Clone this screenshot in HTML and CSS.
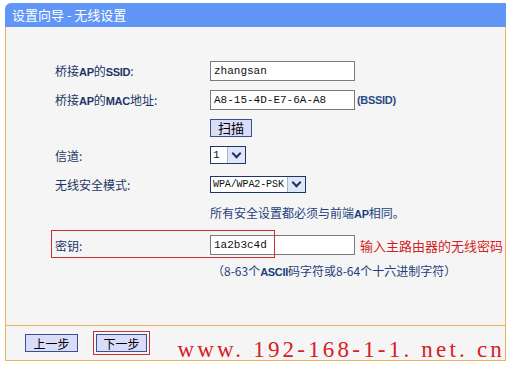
FILE: index.html
```html
<!DOCTYPE html>
<html lang="zh-CN">
<head>
    <meta charset="UTF-8">
    <title>设置向导 - 无线设置</title>
    <link rel="stylesheet" href="styles.css">
</head>
<body>

<div class="wizard">
    <div class="wizard-title">设置向导 - 无线设置</div>

    <div class="wizard-body">
        <div class="row r-ssid">
            <span class="label">桥接<b>AP</b>的<b>SSID</b>:</span>
            <input class="field" type="text" value="zhangsan">
        </div>
        <div class="row r-mac">
            <span class="label">桥接<b>AP</b>的<b>MAC</b>地址:</span>
            <input class="field" type="text" value="A8-15-4D-E7-6A-A8">
            <span class="bssid">(BSSID)</span>
        </div>
        <div class="row r-scan">
            <span class="label"></span>
            <button class="btn btn-scan">扫描</button>
        </div>
        <div class="row r-channel">
            <span class="label">信道:</span>
            <span class="dropdown dd-channel"><span class="dd-text">1</span><span class="dd-arrow"></span></span>
        </div>
        <div class="row r-mode">
            <span class="label">无线安全模式:</span>
            <span class="dropdown dd-mode"><span class="dd-text">WPA/WPA2-PSK</span><span class="dd-arrow"></span></span>
        </div>
        <div class="row r-note">
            <span class="label"></span>
            <span class="note">所有安全设置都必须与前端<b>AP</b>相同。</span>
        </div>
        <div class="row r-key">
            <span class="label">密钥:</span>
            <input class="field" type="text" value="1a2b3c4d">
            <span class="hint-red">输入主路由器的无线密码</span>
            <span class="mark mark-key"></span>
        </div>
        <div class="row r-hint">
            <span class="label"></span>
            <span class="note">（8-63个<b>ASCII</b>码字符或8-64个十六进制字符）</span>
        </div>
    </div>

    <div class="wizard-foot">
        <button class="btn btn-step">上一步</button>
        <span class="next-wrap">
            <button class="btn btn-step">下一步</button>
        </span>
        <span class="watermark">www. 192-168-1-1. net. cn</span>
    </div>
</div>

</body>
</html>
```

FILE: styles.css
```css
body {
    margin: 0;
    background: #ffffff;
    font-family: "Noto Sans CJK SC", "Liberation Sans", sans-serif;
    font-size: 12px;
    color: #1d3566;
}

.wizard {
    width: 501px;
    margin: 3px 0 0 5px;
}

.wizard-title {
    height: 24px;
    line-height: 23px;
    padding-left: 7px;
    background: #6196f6;
    border-top-left-radius: 6px;
    color: #ffffff;
    font-size: 13px;
}

.wizard-body {
    height: 269px;
    padding-top: 29px;
    background: #f5f5f5;
    border-left: 1px solid #e9b45a;
    border-right: 1px solid #e9b45a;
}

.row {
    display: flex;
    align-items: center;
    height: 29px;
    position: relative;
}

.r-scan { height: 27px; }
.r-channel { height: 28px; }
.r-mode { height: 31px; }
.r-note { height: 24px; }
.r-key { height: 28px; margin-top: 7px; }
.r-hint { height: 22px; }

.label {
    width: 155px;
    padding-left: 49px;
    flex: none;
}

.label b,
.note b {
    font-family: "Liberation Sans Narrow", "Liberation Sans", sans-serif;
    font-size: 11px;
    letter-spacing: -0.3px;
}

.field {
    width: 145px;
    height: 20px;
    box-sizing: border-box;
    margin: 0;
    padding: 0 3px;
    border: 1px solid #7b7b7b;
    background: #ffffff;
    font-family: "Liberation Mono", monospace;
    font-size: 11px;
    color: #111111;
}

.bssid {
    margin-left: 2px;
    font-family: "Liberation Sans Narrow", "Liberation Sans", sans-serif;
    font-size: 11px;
    font-weight: bold;
    color: #2a4a86;
    letter-spacing: -0.3px;
}

.btn {
    height: 18px;
    box-sizing: border-box;
    padding: 0;
    border: 1px solid #3a4f93;
    background: #d9ddf8;
    font-family: "Noto Sans CJK SC", sans-serif;
    font-size: 13px;
    line-height: 15px;
    color: #000000;
}

.btn-scan {
    width: 42px;
}

.dropdown {
    display: flex;
    box-sizing: border-box;
    border: 1px solid #22356a;
    background: #ffffff;
    white-space: nowrap;
}

.dd-channel {
    width: 36px;
    height: 18px;
}

.dd-mode {
    width: 96px;
    height: 17px;
}

.dd-text {
    flex: 1;
    padding-left: 2px;
    font-family: "Liberation Mono", monospace;
    font-size: 11px;
    line-height: 16px;
    color: #111111;
}

.dd-mode .dd-text {
    font-size: 10px;
    line-height: 15px;
    letter-spacing: -0.1px;
    overflow: hidden;
}

.dd-arrow {
    width: 17px;
    flex: none;
    border-left: 1px solid #a9b4d6;
    background: #dfe6f7;
    position: relative;
}

.dd-arrow::after {
    content: "";
    position: absolute;
    left: 5px;
    top: 3px;
    width: 5px;
    height: 5px;
    border-right: 2px solid #1f2f60;
    border-bottom: 2px solid #1f2f60;
    transform: rotate(45deg);
}

.dd-mode .dd-arrow::after {
    top: 2px;
}

.note {
    color: #1f3f7c;
}

.r-hint .note {
    margin-left: 2px;
}

.hint-red {
    margin-left: 5px;
    font-size: 13px;
    color: #d21f26;
}

.mark {
    position: absolute;
    border: 1px solid #c9303a;
    pointer-events: none;
}

.mark-key {
    left: 45px;
    top: -1px;
    width: 222px;
    height: 26px;
}

.wizard-foot {
    height: 34px;
    position: relative;
    display: flex;
    align-items: center;
    padding-left: 19px;
    background: #f5f5f5;
    border: 1px solid #e9b45a;
}

.btn-step {
    width: 53px;
    font-size: 12px;
}

.next-wrap {
    display: inline-flex;
    margin-left: 15px;
    padding: 2px;
    border: 1px solid #c9303a;
}

.next-wrap .btn-step {
    width: 51px;
}

.watermark {
    position: absolute;
    right: 0;
    bottom: -3px;
    font-family: "Liberation Serif", serif;
    font-size: 23px;
    color: #d62028;
    letter-spacing: 3.2px;
    white-space: pre;
}
```
